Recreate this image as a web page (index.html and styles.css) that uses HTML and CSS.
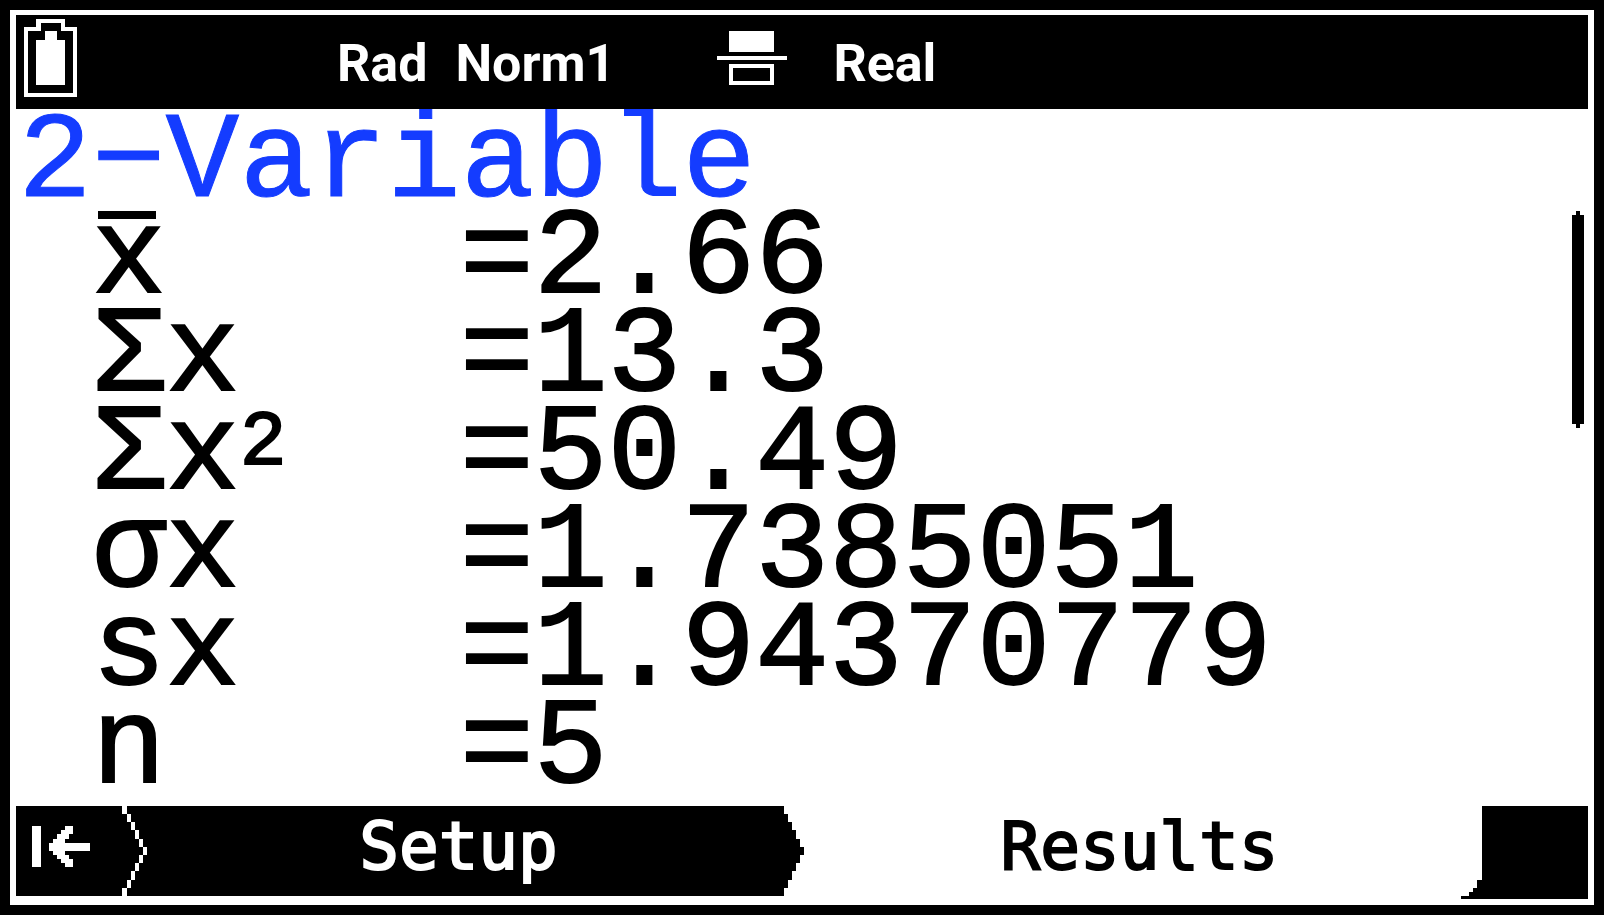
FILE: index.html
```html
<!DOCTYPE html>
<html lang="en">
<head>
    <meta charset="UTF-8">
    <meta name="viewport" content="width=device-width, initial-scale=1.0">
    <title>2-Variable</title>
    <link rel="stylesheet" href="styles.css">
</head>
<body>
    <header class="status-bar">
        <svg class="battery" width="53" height="78" viewBox="0 0 53 78" role="img" aria-label="Battery full">
            <path fill-rule="evenodd" d="M12 0H41V8H53V78H0V8H12ZM17 4V12H4V74H49V12H37V4Z"/>
            <path d="M21 12H33V21H41V66H12V21H21Z"/>
        </svg>
        <span class="angle">Rad</span>
        <span class="display">Norm1</span>
        <svg class="fraction" width="70" height="54" viewBox="0 0 70 54" role="img" aria-label="Fraction result">
            <path fill-rule="evenodd" d="M12 0H57V21H12ZM0 25H70V29H0ZM12 33H57V54H12ZM16 37V50H53V37Z"/>
        </svg>
        <span>Real</span>
    </header>

    <main>
        <h1>2−Variable</h1>
        <div class="results">
            <table>
                <tbody>
                    <tr><th scope="row"><span class="mean">x</span></th><td>=2.66</td></tr>
                    <tr><th scope="row">Σx</th><td>=13.3</td></tr>
                    <tr><th scope="row">Σx<sup>2</sup></th><td>=50.49</td></tr>
                    <tr><th scope="row">σx</th><td>=1.7385051</td></tr>
                    <tr><th scope="row">sx</th><td>=1.94370779</td></tr>
                    <tr><th scope="row">n</th><td>=5</td></tr>
                </tbody>
            </table>
            <svg class="scrollbar" width="12" height="217" viewBox="0 0 12 217" aria-hidden="true">
                <path d="M4 0H8V4H12V213H8V217H4V213H0V4H4Z"/>
            </svg>
        </div>
    </main>

    <nav class="tabs">
        <button class="tab-back" type="button" aria-label="Back">
            <svg class="arrow" width="58" height="41" viewBox="0 0 58 41">
                <path d="M0 0H9V41H0Z"/>
                <path d="M33 0H41V8H37V13H33V17H58V25H33V29H37V33H41V41H33V37H29V33H25V29H21V25H17V17H21V13H25V8H29V4H33Z"/>
            </svg>
            <svg width="25" height="90" viewBox="0 0 25 90">
                <path d="M0 0H5V8H9V16H13V24H17V33H21V41H25V49H21V57H17V65H13V74H9V82H5V90H0V82H5V74H9V65H13V57H17V49H21V41H17V33H13V24H9V16H5V8H0Z"/>
            </svg>
        </button>
        <button class="tab" type="button">Setup
            <svg class="tip" width="20" height="90" viewBox="0 0 20 90">
                <path d="M20 0H0V8H4V16H8V24H12V33H16V41H20V49H16V57H12V65H8V74H4V82H0V90H20Z"/>
            </svg>
        </button>
        <button class="tab active" type="button">Results</button>
        <svg class="corner" width="127" height="93" viewBox="0 0 127 93" aria-hidden="true">
            <path d="M21 0H127V93H0V90H8V86H12V82H16V74H21Z"/>
        </svg>
    </nav>
</body>
</html>
```

FILE: styles.css
```css
* {
    box-sizing: border-box;
}

body {
    margin: 0;
    min-height: 100vh;
    display: flex;
    flex-direction: column;
    border: 10px solid #000;
    padding: 5px 6px 6px;
    background-color: #fff;
    color: #000;
    font-family: "Liberation Mono", monospace;
}

svg {
    display: block;
    flex: none;
    fill: currentColor;
    shape-rendering: crispEdges;
}

.status-bar {
    position: relative;
    z-index: 1;
    display: flex;
    height: 94px;
    padding: 4px 8px;
    background-color: #000;
    color: #fff;
    font-family: Roboto, sans-serif;
    font-size: 52px;
    font-weight: bold;
    line-height: 90px;
}

.angle {
    margin-left: 260px;
}

.display {
    margin-left: 28px;
}

.fraction {
    margin: 12px 46px 0 102px;
}

main {
    flex: 1;
    padding: 6px 4px 0 2px;
    font-size: 123px;
    line-height: 98px;
    -webkit-text-stroke: 2px currentColor;
}

h1 {
    height: 96px;
    margin: 0;
    font-size: 123px;
    font-weight: normal;
    color: #143cff;
    -webkit-text-stroke-width: 1px;
}

.results {
    display: flex;
    justify-content: space-between;
}

table {
    border-collapse: collapse;
}

th,
td {
    height: 98px;
    padding: 0;
    font-weight: normal;
    text-align: left;
    vertical-align: top;
}

th {
    width: 442px;
    padding-left: 74px;
}

.mean {
    position: relative;
}

/* bar over the x */
.mean::before {
    content: "";
    position: absolute;
    left: 6px;
    right: 10px;
    top: 21px;
    height: 8px;
    background-color: #000;
}

sup {
    font-size: 78px;
    line-height: 0;
    vertical-align: 24px;
}

.tabs {
    display: grid;
    grid-template-columns: 131px 1fr 1fr 127px;
    height: 93px;
}

.tabs button {
    height: 90px;
    margin: 0;
    border: 0;
    padding: 0;
    background-color: #000;
    color: #fff;
    font-family: "DejaVu Sans Mono", monospace;
    font-size: 66px;
    line-height: 80px;
    -webkit-text-stroke: 2px currentColor;
}

.tabs .tab-back {
    display: flex;
    align-items: center;
    justify-content: space-between;
    padding-left: 16px;
}

.arrow {
    margin-bottom: 10px;
}

.tabs .tab {
    position: relative;
    padding: 0 34px 8px 0;
}

.tabs .active {
    padding: 0 0 8px 14px;
    background-color: #fff;
    color: #000;
}

.tip {
    position: absolute;
    top: 0;
    right: 0;
    color: #fff;
}
```
